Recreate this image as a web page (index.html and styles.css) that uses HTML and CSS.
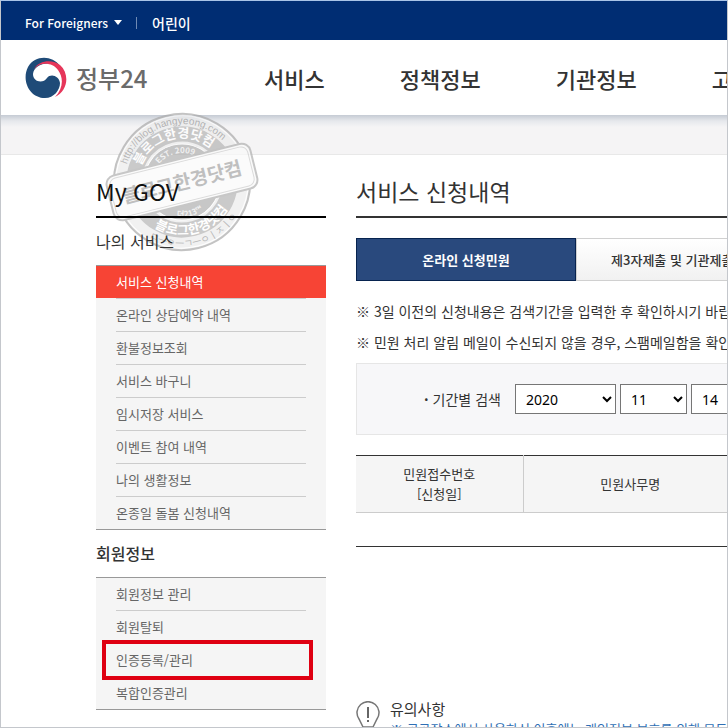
FILE: index.html
```
<!DOCTYPE html>
<html lang="ko">
<head>
    <meta charset="UTF-8">
    <meta name="viewport" content="width=device-width, initial-scale=1.0">
    <title>정부24 - 서비스 신청내역</title>
    <link rel="stylesheet" href="styles.css">
</head>
<body>
    <div class="page">
        <div class="top-bar">
            <a href="#" class="lang">For Foreigners <span class="caret"></span></a>
            <a href="#" class="kids">어린이</a>
        </div>
        <header class="header">
            <a href="#" class="logo">
                <svg width="42" height="42" viewBox="0 0 42 42" aria-hidden="true">
                    <path d="M35 9C27-2 10-2 3 10C-4 24 5 41 20 41C29 41 35 33 35 26C34 19 26 16 22 21C18 27 8 25 8 17C9 8 21 3 35 9Z" fill="#1f4b78"/>
                    <path d="M9 12C14 3 28 2 35 8C45 17 43 34 30 40C38 32 39 21 33 13C27 5 15 5 9 12Z" fill="#e6365a"/>
                </svg>
                <span>정부24</span>
            </a>
            <nav class="main-nav">
                <a href="#">서비스</a>
                <a href="#">정책정보</a>
                <a href="#">기관정보</a>
                <a href="#">고객센터</a>
            </nav>
        </header>
        <div class="sub-band"></div>

        <svg class="stamp" width="156" height="142" viewBox="-78 -71 156 142" aria-hidden="true">
            <defs>
                <path id="arc-out" d="M-58 0A58 58 0 0 1 58 0"/>
                <path id="arc-in" d="M-44 0A44 44 0 0 1 44 0"/>
                <path id="arc-est" d="M-29 0A29 29 0 0 1 29 0"/>
                <path id="arc-tm" d="M-35 0A35 35 0 0 0 35 0"/>
                <path id="arc-low" d="M-53 0A53 53 0 0 0 53 0"/>
                <path id="arc-bottom" d="M-65 0A65 65 0 0 0 65 0"/>
            </defs>
            <g transform="rotate(-14)">
                <circle r="68" class="ring"/>
                <circle r="66" class="ring thin"/>
                <circle r="48" class="band"/>
                <circle r="38" class="disc"/>
                <text class="stamp-url"><textPath href="#arc-out" startOffset="50%">http://blog.hangyeong.com</textPath></text>
                <text class="stamp-name"><textPath href="#arc-in" startOffset="50%">블로그한경닷컴</textPath></text>
                <text class="stamp-est"><textPath href="#arc-est" startOffset="50%">EST. 2009</textPath></text>
                <text class="stamp-est"><textPath href="#arc-tm" startOffset="50%">더213™</textPath></text>
                <text class="stamp-name"><textPath href="#arc-low" startOffset="50%">블로그한경닷컴</textPath></text>
                <text class="stamp-url"><textPath href="#arc-bottom" startOffset="50%">ㅁㅡㅇㅡㄱㅡㅇㅣㅈㅣㅇ</textPath></text>
                <rect x="-74" y="-23" width="148" height="46" rx="9" class="plate"/>
                <rect x="-71" y="-20" width="142" height="40" rx="7" class="plate-line"/>
                <text class="stamp-title" y="7">블로그한경닷컴</text>
            </g>
        </svg>

        <div class="container">
            <aside class="side">
                <h2 class="side-title">My GOV</h2>
                <h3 class="light">나의 서비스</h3>
                <ul class="side-menu">
                    <li class="active"><a href="#">서비스 신청내역</a></li>
                    <li><a href="#">온라인 상담예약 내역</a></li>
                    <li><a href="#">환불정보조회</a></li>
                    <li><a href="#">서비스 바구니</a></li>
                    <li><a href="#">임시저장 서비스</a></li>
                    <li><a href="#">이벤트 참여 내역</a></li>
                    <li><a href="#">나의 생활정보</a></li>
                    <li><a href="#">온종일 돌봄 신청내역</a></li>
                </ul>
                <h3>회원정보</h3>
                <ul class="side-menu">
                    <li><a href="#">회원정보 관리</a></li>
                    <li><a href="#">회원탈퇴</a></li>
                    <li class="marked"><a href="#">인증등록/관리</a></li>
                    <li><a href="#">복합인증관리</a></li>
                </ul>
            </aside>

            <main class="content">
                <h1>서비스 신청내역</h1>
                <div class="tabs">
                    <button type="button" class="tab active">온라인 신청민원</button>
                    <button type="button" class="tab">제3자제출 및 기관제출 민원</button>
                </div>
                <p class="note">※ 3일 이전의 신청내용은 검색기간을 입력한 후 확인하시기 바랍니다.</p>
                <p class="note">※ 민원 처리 알림 메일이 수신되지 않을 경우, 스팸메일함을 확인해 주세요.</p>
                <form class="search">
                    <label for="year">기간별 검색</label>
                    <select id="year" class="year"><option>2020</option></select>
                    <select class="month" aria-label="월"><option>11</option></select>
                    <select class="month" aria-label="일"><option>14</option></select>
                </form>
                <table class="list">
                    <thead>
                        <tr>
                            <th class="num">민원접수번호<br>[신청일]</th>
                            <th class="name">민원사무명</th>
                            <th></th>
                        </tr>
                    </thead>
                    <tbody>
                        <tr><td colspan="3"></td></tr>
                    </tbody>
                </table>
                <section class="notice">
                    <svg width="24" height="32" viewBox="0 0 24 32" aria-hidden="true">
                        <path d="M7 26L3 18A11 11 0 1 1 21 18L17 26Z" fill="none" stroke="#777" stroke-width="1.5"/>
                        <path d="M12 6V17M12 19V21" stroke="#666" stroke-width="2"/>
                    </svg>
                    <div>
                        <h4>유의사항</h4>
                        <p>※ 공공장소에서 사용하신 이후에는 개인정보 보호를 위해 모든</p>
                    </div>
                </section>
            </main>
        </div>
    </div>
</body>
</html>
```

FILE: styles.css
```
* {
    margin: 0;
    padding: 0;
    box-sizing: border-box;
}

body {
    font-family: 'Noto Sans CJK KR', sans-serif;
    font-size: 13px;
    color: #333;
    background: #fff;
}

a {
    color: inherit;
    text-decoration: none;
}

ul {
    list-style: none;
}

.page {
    position: relative;
    height: 100vh;
    overflow: hidden;
    border: 1px solid #c4c7cc;
    border-top-color: #a9c4e8;
}

.top-bar {
    display: flex;
    align-items: center;
    height: 39px;
    padding: 4px 24px 0;
    background: #002d73;
    color: #fff;
    font-weight: 500;
}

.lang {
    display: flex;
    align-items: center;
    gap: 6px;
    font-size: 12px;
}

.caret {
    border: 4px solid transparent;
    border-top: 5px solid #fff;
    border-bottom: 0;
}

.kids {
    display: flex;
    align-items: center;
    margin-left: 14px;
    font-size: 14px;
}

.kids::before {
    content: "";
    width: 1px;
    height: 12px;
    margin-right: 15px;
    background: #6f8ab4;
}

.header {
    display: flex;
    align-items: center;
    height: 75px;
    padding-left: 24px;
    background: #fff;
    white-space: nowrap;
}

.logo {
    display: flex;
    flex: none;
    align-items: center;
    gap: 9px;
    width: 239px;
    color: #6b6b6b;
    font-size: 24px;
    font-weight: 500;
}

.main-nav {
    display: flex;
    gap: 75px;
    font-size: 22px;
    font-weight: 500;
}

.sub-band {
    height: 40px;
    background: linear-gradient(#c5cbd4, #e6e8ec 6px, #f5f4f5 12px);
    border-bottom: 1px solid #e8e8e8;
}

/* stamp */
.stamp {
    position: absolute;
    left: 103px;
    top: 110px;
    opacity: 0.7;
}

.stamp text {
    text-anchor: middle;
    font-weight: 700;
}

.ring {
    fill: #ececec;
    stroke: #aaa;
    stroke-width: 2;
}

.ring.thin {
    fill: none;
    stroke: #fff;
    stroke-width: 1;
}

.band {
    fill: none;
    stroke: #b4b4b4;
    stroke-width: 15;
}

.disc {
    fill: #b0b0b0;
    stroke: #fff;
}

.plate {
    fill: #fafafa;
    stroke: #b0b0b0;
    stroke-width: 2;
}

.plate-line {
    fill: none;
    stroke: #ccc;
}

.stamp .stamp-url {
    fill: #999;
    font-family: 'Liberation Sans', 'Noto Sans CJK KR', sans-serif;
    font-size: 10px;
    font-weight: 400;
}

.stamp-name { font-size: 13px; fill: #fff; }
.stamp-est { font-size: 8px; fill: #eee; }
.stamp-title { font-size: 19px; fill: #a4a4a4; }

.container {
    position: relative;
    display: flex;
    gap: 30px;
    padding: 15px 0 0 95px;
}

.side {
    flex: none;
    width: 230px;
}

.side-title {
    height: 48px;
    border-bottom: 2px solid #000;
    color: #111;
    font-size: 23px;
    font-weight: 400;
    line-height: 42px;
}

.side h3 {
    height: 47px;
    font-size: 16px;
    font-weight: 500;
    line-height: 46px;
}

.side .light {
    font-weight: 400;
}

.side-menu {
    background: #f5f5f5;
    border-top: 1px solid #999;
    border-bottom: 1px solid #999;
    color: #666;
}

.side-menu li {
    position: relative;
    height: 33px;
    padding: 0 20px;
    line-height: 32px;
}

.side-menu a {
    display: block;
    height: 33px;
    border-bottom: 1px solid #ccc;
}

.side-menu li:last-child,
.side-menu li:last-child a {
    height: 32px;
    border-bottom: 0;
}

.side-menu .active {
    height: 32px;
    margin-bottom: 1px;
    background: #f74435;
    color: #fff;
}

.marked::after {
    content: "";
    position: absolute;
    inset: -4px 13px -3px 6px;
    border: 4px solid #df0012;
}

.content {
    flex: 1;
    min-width: 0;
}

h1 {
    height: 48px;
    border-bottom: 2px solid #333;
    font-size: 23px;
    font-weight: 400;
    line-height: 42px;
}

.tabs {
    display: flex;
    margin: 20px 0 15px;
}

.tab {
    flex: none;
    width: 220px;
    height: 43px;
    border: 1px solid #d0d0d0;
    background: linear-gradient(#fff, #f1f1f1);
    color: #333;
    font: 500 13px 'Noto Sans CJK KR', sans-serif;
}

.tab.active {
    border-color: #07234f;
    background: #29497d;
    color: #fff;
    font-weight: 700;
}

.note {
    font-size: 14px;
    line-height: 31px;
    white-space: nowrap;
}

.search {
    display: flex;
    align-items: center;
    gap: 4px;
    height: 72px;
    margin: 5px 0 20px;
    padding-left: 67px;
    border: 1px solid #e6e6e6;
    border-right: 0;
    background: #f7f7f9;
    font-size: 14px;
}

.search label {
    flex: none;
    margin-right: 10px;
}

.search label::before {
    content: "·";
    margin-right: 4px;
    font-weight: 700;
}

.search select {
    flex: none;
    height: 30px;
    padding-left: 6px;
    border: 1px solid #767676;
    border-radius: 0;
    background-color: #fff;
    color: #000;
    font: 14px 'Noto Sans', 'Noto Sans CJK KR', sans-serif;
}

.search .year { width: 101px; }
.search .month { width: 67px; }

.list {
    width: 100%;
    border-collapse: collapse;
    border-top: 1px solid #333;
    border-bottom: 1px solid #333;
    table-layout: fixed;
}

.list th {
    height: 57px;
    border-bottom: 1px solid #ccc;
    background: #f5f5f5;
    font-weight: 400;
    line-height: 20px;
}

.list .num {
    width: 167px;
    border-right: 1px solid #ccc;
}

.list .name { width: 214px; }
.list td { height: 34px; }

.notice {
    display: flex;
    gap: 10px;
    margin-top: 150px;
    white-space: nowrap;
}

.notice svg {
    flex: none;
    margin-top: 4px;
}

.notice h4 {
    font-size: 15px;
    font-weight: 400;
    line-height: 24px;
}

.notice p {
    color: #2f6fb5;
    font-size: 13px;
    line-height: 16px;
}
```
